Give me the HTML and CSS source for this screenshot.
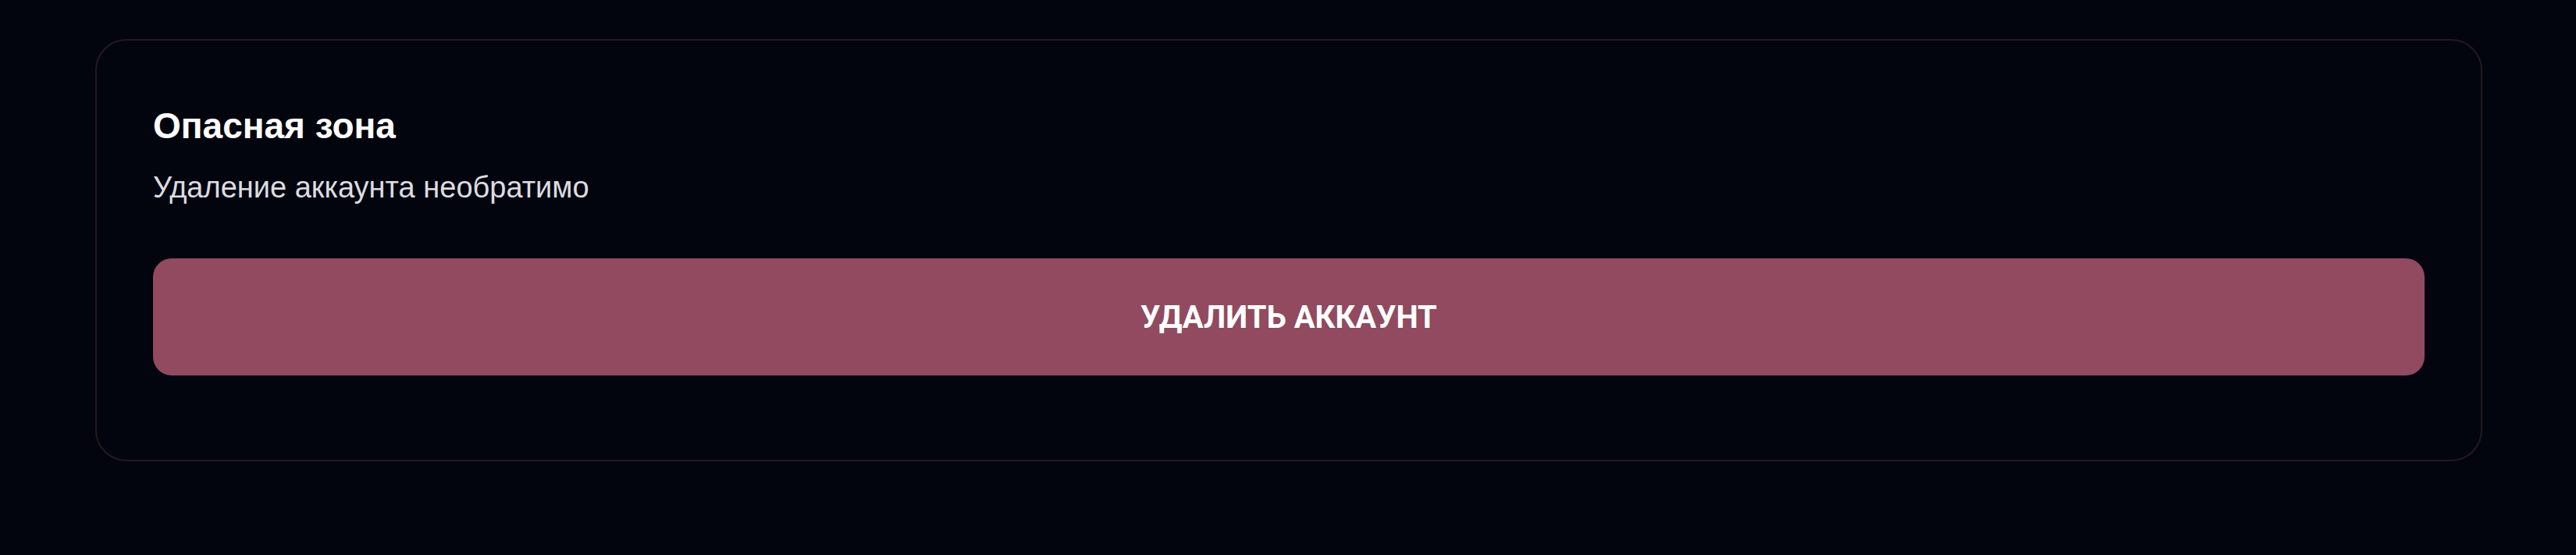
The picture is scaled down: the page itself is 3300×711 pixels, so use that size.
FILE: index.html
```html
<!DOCTYPE html>
<html lang="ru">
<head>
<meta charset="utf-8">
<title>Опасная зона</title>
<link rel="stylesheet" href="styles.css">
</head>
<body>
<main class="page">
  <section class="danger-card">
    <h2 class="danger-title">Опасная зона</h2>
    <p class="danger-text">Удаление аккаунта необратимо</p>
    <button class="danger-button" type="button">УДАЛИТЬ АККАУНТ</button>
  </section>
</main>
</body>
</html>
```
FILE: styles.css
```css
html, body {
  margin: 0;
  padding: 0;
  background: #03050e;
}
body {
  font-family: "Liberation Sans", Arial, sans-serif;
  color: #ffffff;
}
.page {
  padding: 50px 120px 0 122px;
}
.danger-card {
  border: 2px solid #261820;
  border-radius: 40px;
  padding: 82px 72px 108px 72px;
  display: flex;
  flex-direction: column;
}
.danger-title {
  margin: 0;
  font-size: 46px;
  line-height: 54px;
  font-weight: 700;
  color: #ffffff;
}
.danger-text {
  margin: 29px 0 0 0;
  font-size: 38px;
  line-height: 46px;
  color: #dcdce2;
}
.danger-button {
  margin-top: 68px;
  height: 150px;
  border: none;
  border-radius: 24px;
  background: #914a5f;
  color: #ffffff;
  font-family: Roboto, "Liberation Sans", sans-serif;
  font-weight: 700;
  font-size: 40px;
  letter-spacing: 0;
}
```
